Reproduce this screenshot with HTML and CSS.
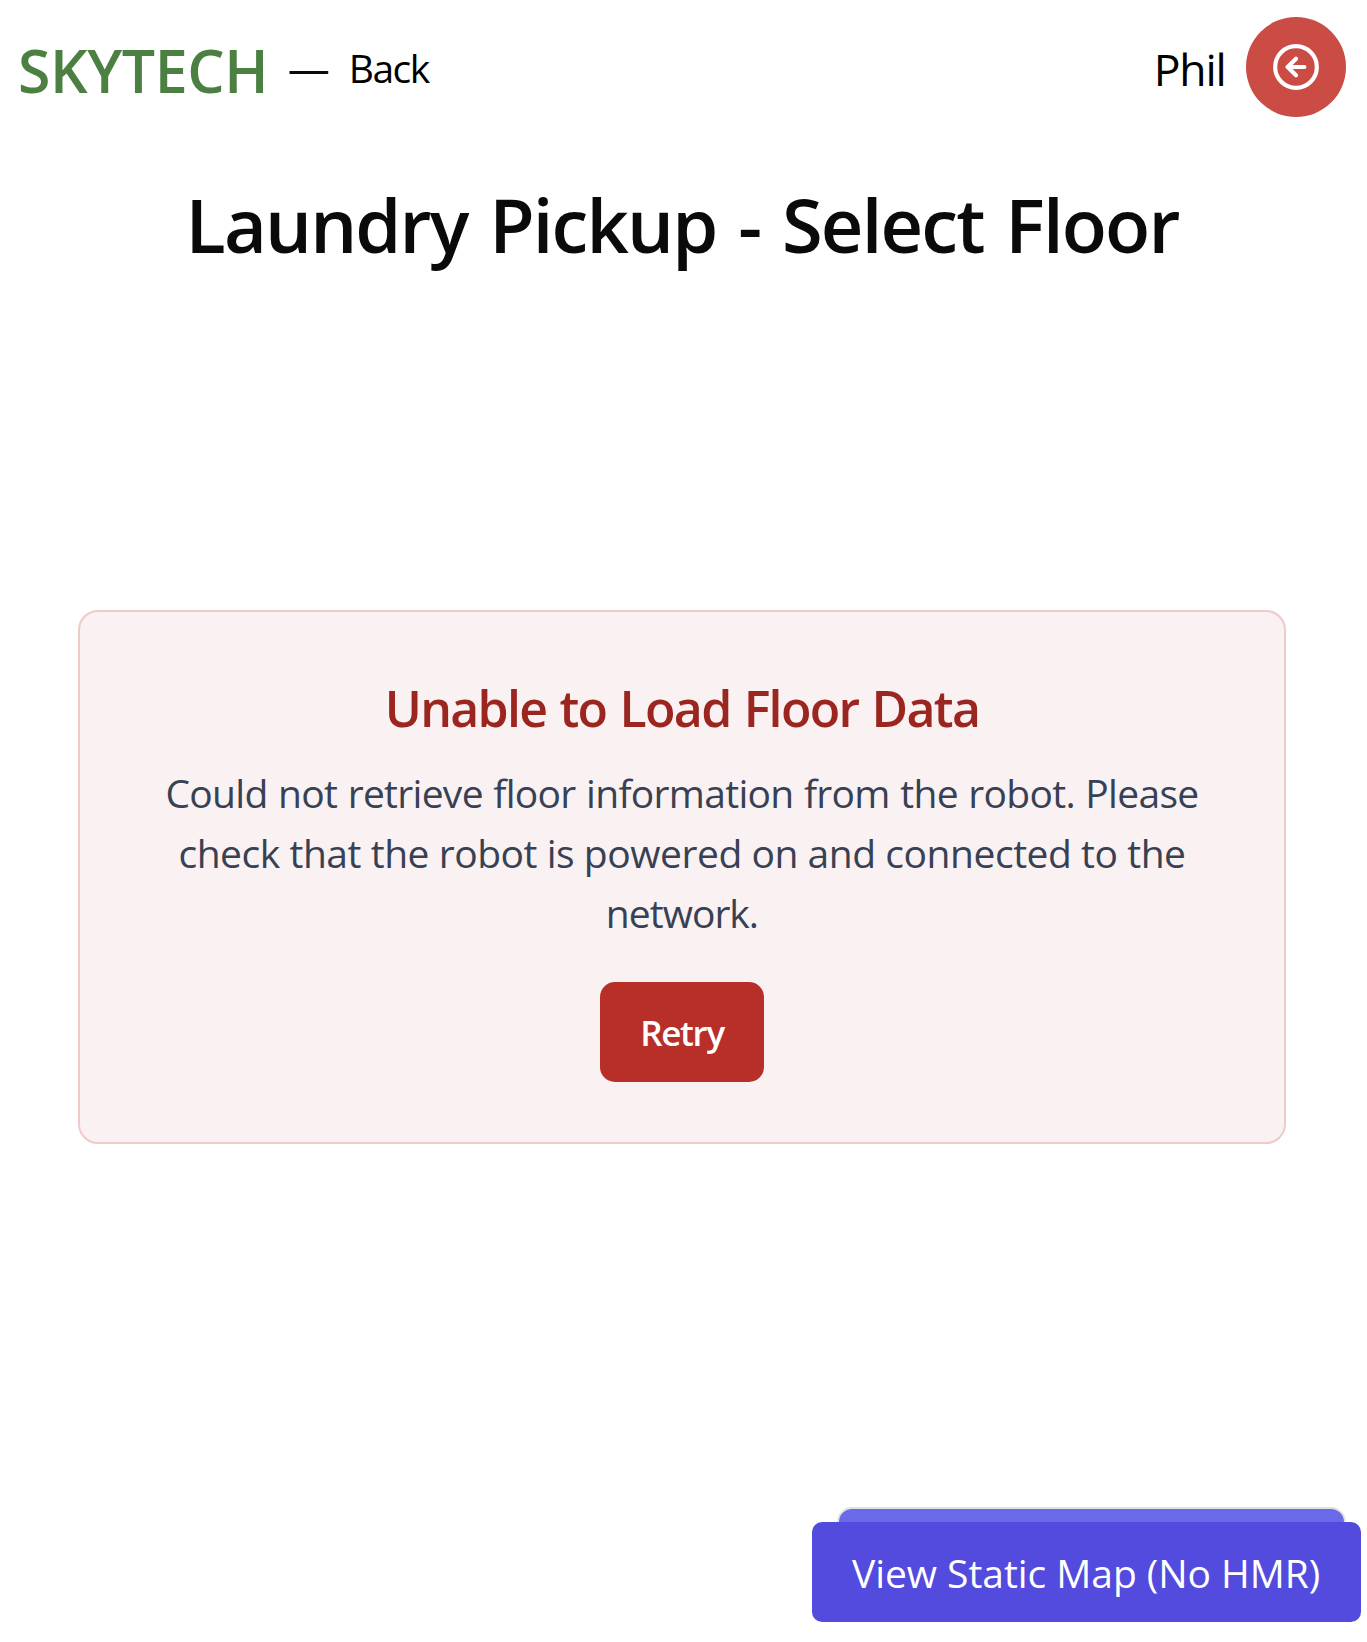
FILE: index.html
```
<!DOCTYPE html>
<html lang="en">
<head>
<meta charset="utf-8">
<title>Laundry Pickup - Select Floor</title>
<link rel="stylesheet" href="styles.css">
</head>
<body>
<header class="topbar">
  <span class="brand">SKYTECH</span>
  <span class="dash">—</span>
  <a class="back">Back</a>
  <span class="user">Phil</span>
  <button class="logout" aria-label="Log out">
    <svg class="logout-icon" viewBox="0 0 24 24" fill="none" stroke="currentColor" stroke-width="2" stroke-linecap="round" stroke-linejoin="round">
      <circle cx="12" cy="12" r="10"/>
      <path d="m12 8-4 4 4 4"/>
      <path d="M16 12H8"/>
    </svg>
  </button>
</header>
<main class="page">
  <h1 class="title">Laundry Pickup - Select Floor</h1>
  <section class="error-card">
    <h2 class="error-title">Unable to Load Floor Data</h2>
    <p class="error-text">
      <span class="line line-first">Could not retrieve floor information from the robot. Please</span>
      <span class="line line-second">check that the robot is powered on and connected to the</span>
      <span class="line line-last">network.</span>
    </p>
    <button class="retry">Retry</button>
  </section>
</main>
<div class="map-shadow"></div>
<a class="map-link">View Static Map (No HMR)</a>
</body>
</html>
```
FILE: styles.css
```
* {
  box-sizing: border-box;
}

body {
  margin: 0;
  min-height: 1642px;
  background: #fff;
  color: #0a0a0a;
  font-family: "Segoe UI", "Open Sans", "Noto Sans", sans-serif;
}

button {
  border: 0;
  padding: 0;
  font-family: inherit;
}

.topbar {
  display: flex;
  align-items: center;
  height: 134px;
  padding: 0 21px 0 18px;
}

.brand {
  padding-top: 6px;
  font-size: 59px;
  font-weight: 600;
  line-height: 60px;
  letter-spacing: -0.4px;
  color: #4c8043;
}

.dash {
  margin-left: 19.5px;
  padding-top: 2px;
  font-size: 42px;
  line-height: 60px;
}

.back {
  margin-left: 19px;
  padding-top: 2px;
  font-size: 39px;
  line-height: 60px;
  letter-spacing: -1.5px;
  color: #000;
}

.user {
  margin-left: auto;
  padding-top: 3px;
  font-size: 44.5px;
  line-height: 60px;
  letter-spacing: -1.2px;
  color: #000;
}

.logout {
  display: flex;
  align-items: center;
  justify-content: center;
  width: 100px;
  height: 100px;
  margin-left: 20.5px;
  border-radius: 50%;
  background: #cb4b45;
  color: #fff;
}

.logout-icon {
  width: 50px;
  height: 50px;
}

.title {
  margin: 51px 0 0;
  padding-right: 3px;
  font-size: 74px;
  font-weight: 600;
  line-height: 80px;
  letter-spacing: -1.84px;
  word-spacing: 4.4px;
  text-align: center;
}

.error-card {
  display: flex;
  flex-direction: column;
  align-items: center;
  height: 534px;
  margin: 345px 81px 0 78px;
  padding-top: 66px;
  border: 2px solid #f0c9c9;
  border-radius: 20px;
  background: #faf1f2;
  text-align: center;
}

.error-title {
  margin: 0;
  font-size: 50px;
  font-weight: 600;
  line-height: 60px;
  letter-spacing: -1.67px;
  word-spacing: 1.7px;
  color: #9b2620;
}

.error-text {
  margin: 25px 0 39px;
  font-size: 39px;
  line-height: 60px;
  color: #384153;
}

.line {
  display: block;
  white-space: nowrap;
}

.line-first {
  letter-spacing: -0.7px;
  word-spacing: 1px;
}

.line-second {
  letter-spacing: -0.46px;
}

.line-last {
  letter-spacing: -0.97px;
}

.retry {
  width: 164px;
  height: 100px;
  border-radius: 15px;
  background: #b82f29;
  color: #fff;
  font-size: 35px;
  font-weight: 600;
  letter-spacing: -1.3px;
}

.map-shadow {
  position: fixed;
  right: 21px;
  bottom: 36px;
  width: 509px;
  height: 99px;
  border: 2px solid #e2e2e2;
  border-radius: 15px;
  background: #6a69e9;
}

.map-link {
  position: fixed;
  right: 6px;
  bottom: 20px;
  width: 549px;
  height: 100px;
  padding: 1px 0 0 40px;
  border-radius: 10px;
  background: #534ade;
  color: #fff;
  font-size: 39px;
  line-height: 100px;
  letter-spacing: -0.05px;
  white-space: nowrap;
}
```
